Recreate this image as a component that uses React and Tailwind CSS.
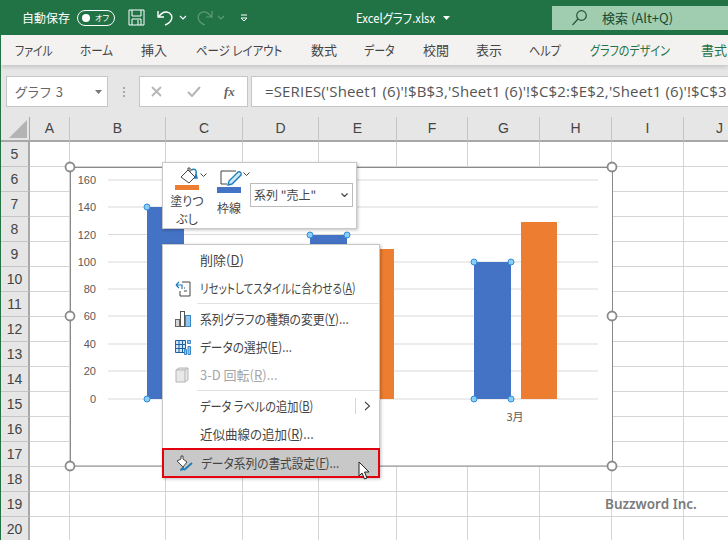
const jp = "font-['Noto_Sans_CJK_JP',sans-serif] [font-feature-settings:'palt']"
// Meiryo UI has narrow kana, so kana heavy labels get squeezed to the same width
const narrow = 'inline-block origin-left whitespace-nowrap'

const tabs = [
    {label: 'ファイル', w: 'w-[37px]', sx: 'scale-x-[0.84]'},
    {label: 'ホーム', w: 'w-[33px]', sx: 'scale-x-[0.89]'},
    {label: '挿入', w: 'w-[27px]', sx: ''},
    {label: 'ページ レイアウト', w: 'w-[87px]', sx: 'scale-x-[0.88]'},
    {label: '数式', w: 'w-[25px]', sx: ''},
    {label: 'データ', w: 'w-[31px]', sx: 'scale-x-[0.84]'},
    {label: '校閲', w: 'w-[25px]', sx: ''},
    {label: '表示', w: 'w-[25px]', sx: ''},
    {label: 'ヘルプ', w: 'w-[33px]', sx: 'scale-x-[0.86]'},
    {label: 'グラフのデザイン', w: 'w-[83px]', sx: 'scale-x-[0.85]', green: true},
    {label: '書式', w: 'w-[26px]', sx: '', green: true},
]
const columns = ['A', 'B', 'C', 'D', 'E', 'F', 'G', 'H', 'I', 'J']
const rows = [5, 6, 7, 8, 9, 10, 11, 12, 13, 14, 15, 16, 17, 18, 19, 20]
const gridCols = 'grid grid-cols-[29px_40px_96px_77px_76px_78px_71px_72px_72px_72px_72px]'

function Caret({dim}){
    return <svg width="8" height="5" viewBox="0 0 8 5" fill="none" stroke={dim ? '#5c9a78' : '#fff'} strokeWidth="1.2"><path d="M1 1l3 3 3-3"/></svg>
}

function TitleBar(){
    return(
        <div className={`h-[35px] bg-[#217346] flex items-center text-white shrink-0 ${jp}`}>
            <span className="ml-[21px] text-[12px] w-[50px] whitespace-nowrap">自動保存</span>
            <div className="ml-[5px] w-[38px] h-[16px] rounded-full border border-white flex items-center justify-between pl-[4px] pr-[5px]">
                <span className="w-[8px] h-[8px] rounded-full bg-white"></span>
                <span className="text-[8px] leading-none">オフ</span>
            </div>
            <svg className="ml-[13px]" width="17" height="17" viewBox="0 0 17 17" fill="none" stroke="#fff" strokeWidth="1"><path d="M1 1h15v15H1zM4 1v6h9V1M4 16v-6h9v6M10 11v5"/></svg>
            <svg className="ml-[12px]" width="17" height="18" viewBox="0 0 17 18" fill="none" stroke="#fff" strokeWidth="1.4"><path d="M1 2v6h6M1.5 8C5 3 9 2 12.500 4c4 3 3 9-4.500 12"/></svg>
            <span className="ml-[5px]"><Caret/></span>
            <svg className="ml-[9px]" width="17" height="18" viewBox="0 0 17 18" fill="none" stroke="#5c9a78" strokeWidth="1.2"><path d="M16 2v6h-6M15.500 8C12 3 8 2 4.500 4c-4 3-3 9 4.500 12"/></svg>
            <span className="ml-[4px]"><Caret dim/></span>
            <svg className="ml-[15px]" width="8" height="8" viewBox="0 0 8 8" fill="none" stroke="#fff" strokeWidth="1"><path d="M1 1h6M1 4l3 3 3-3z"/></svg>
            <span className="ml-[108px] text-[13px] w-[82px]"><span className={`${narrow} scale-x-[0.87]`}>Excelグラフ.xlsx</span></span>
            <svg className="ml-[5px]" width="7" height="4" viewBox="0 0 7 4" fill="#fff"><path d="M0 0h7L3.500 4z"/></svg>
            <div className="ml-[102px] flex-1 h-[24px] bg-[#a0cdb0] flex items-center text-[#1c4a2e]">
                <svg className="ml-[20px]" width="15" height="16" viewBox="0 0 15 16" fill="none" stroke="#23553a" strokeWidth="1.2"><circle cx="9.500" cy="5.500" r="4.800"/><path d="M6 9l-5.500 6"/></svg>
                <span className="ml-[15px] text-[13px] whitespace-nowrap">検索 (Alt+Q)</span>
            </div>
        </div>
    )
}

function TabBar(){
    return(
        <div className={`relative z-10 h-[30px] bg-[#f3f2f1] flex items-center gap-[28px] pl-[14px] shrink-0 shadow-[0_2px_4px_rgba(0,0,0,0.15)] ${jp}`}>
            {tabs.map(t => (
                <span key={t.label} className={`${t.w} shrink-0 text-[13px] ${t.green ? 'text-[#217346]' : 'text-[#444]'}`}>
                    <span className={`${narrow} ${t.sx}`}>{t.label}</span>
                </span>
            ))}
        </div>
    )
}

function FormulaBar(){
    return(
        <div className="h-[52px] bg-[#e6e6e6] flex pt-[11px] pl-[5px] shrink-0">
            <div className={`w-[102px] h-[31px] bg-white border border-[#c6c6c6] flex items-center justify-between pl-[8px] pr-[5px] text-[13px] text-[#666] ${jp}`}>
                <span className="tracking-[1px]">グラフ 3</span>
                <svg width="7" height="4" viewBox="0 0 7 4" fill="#777"><path d="M0 0h7L3.500 4z"/></svg>
            </div>
            <div className="w-[31px] h-[31px] flex flex-col items-center justify-center gap-[2px]">
                <span className="w-[2px] h-[2px] bg-[#aaa]"></span>
                <span className="w-[2px] h-[2px] bg-[#aaa]"></span>
                <span className="w-[2px] h-[2px] bg-[#aaa]"></span>
            </div>
            <div className="w-[109px] h-[31px] bg-white border border-[#c6c6c6] flex items-center pl-[11px]">
                <svg width="11" height="11" viewBox="0 0 11 11" stroke="#b5b5b5" strokeWidth="1.800" fill="none"><path d="M1 1l9 9M10 1l-9 9"/></svg>
                <svg className="ml-[25px]" width="14" height="11" viewBox="0 0 14 11" stroke="#b5b5b5" strokeWidth="2" fill="none"><path d="M1 6l4 4 8-9"/></svg>
                <span className="ml-[23px] text-[13px] font-bold italic text-[#666] font-['Liberation_Serif',serif]">fx</span>
            </div>
            <div className="ml-[3px] flex-1 min-w-0 h-[31px] bg-white border border-r-0 border-[#c6c6c6] flex items-center pl-[13px] overflow-hidden">
                <span className="whitespace-nowrap text-[15px] text-[#555] font-['Open_Sans',sans-serif] tracking-[0.16px]">=SERIES('Sheet1 (6)'!$B$3,'Sheet1 (6)'!$C$2:$E$2,'Sheet1 (6)'!$C$3</span>
            </div>
        </div>
    )
}

function Sheet(){
    return(
        <div className={`${gridCols} font-['Liberation_Sans',sans-serif]`}>
            <div className="h-[25px] bg-[#e6e6e6] border-b-2 border-r border-[#a8a8a8] flex items-end justify-end pr-[2px] pb-[2px]">
                <svg width="18" height="18" viewBox="0 0 18 18" fill="#b4b4b4"><path d="M18 0v18H0z"/></svg>
            </div>
            {columns.map(c => (
                <div key={c} className="h-[25px] bg-[#e6e6e6] border-b-2 border-r border-b-[#a8a8a8] border-r-[#c4c4c4] flex items-center justify-center text-[14px] text-[#444]">{c}</div>
            ))}
            {rows.map(r => [
                <div key={r} className="h-[25px] bg-[#e6e6e6] border-b border-r-2 border-b-[#c4c4c4] border-r-[#a8a8a8] flex items-center justify-center text-[14px] text-[#444]">{r}</div>,
                ...columns.map(c => <div key={r + c} className="h-[25px] bg-white border-b border-r border-[#d4d4d4]"></div>),
            ])}
        </div>
    )
}

const axis = [
    {label: 160, y: 180},
    {label: 140, y: 207},
    {label: 120, y: 234.500},
    {label: 100, y: 262},
    {label: 80, y: 289},
    {label: 60, y: 316},
    {label: 40, y: 344},
    {label: 20, y: 371},
    {label: 0, y: 399},
]
const bars = [
    {x: 147, y: 207, w: 37, fill: '#4472c4', selected: true},
    {x: 310, y: 235, w: 37, fill: '#4472c4', selected: true},
    {x: 358, y: 249, w: 36, fill: '#ed7d31'},
    {x: 474, y: 262, w: 37, fill: '#4472c4', selected: true},
    {x: 521, y: 222, w: 36, fill: '#ed7d31'},
]
const chartHandles = [[70, 167], [612, 167], [70, 316], [612, 316], [70, 466], [612, 466]]

// the chart keeps page coordinates, so the numbers match the picture directly
function Chart(){
    return(
        <svg className="absolute left-0 top-0" width="728" height="540" viewBox="0 0 728 540">
            <rect x="70.500" y="167.500" width="542" height="298.500" fill="#fff" stroke="#8a8a8a"/>
            {axis.map(a => (
                <g key={a.label}>
                    <line x1="108" x2="598" y1={a.y} y2={a.y} stroke="#d9d9d9"/>
                    <text x="96" y={a.y + 4} textAnchor="end" fontSize="11" fill="#595959" fontFamily="Liberation Sans">{a.label}</text>
                </g>
            ))}
            {bars.map(b => <rect key={b.x} x={b.x} y={b.y} width={b.w} height={399 - b.y} fill={b.fill}/>)}
            {bars.filter(b => b.selected).map(b => (
                <g key={b.x} fill="#8ccdf5" stroke="#2f8fdc">
                    <circle cx={b.x} cy={b.y} r="3"/>
                    <circle cx={b.x + b.w} cy={b.y} r="3"/>
                    <circle cx={b.x} cy="399" r="3"/>
                    <circle cx={b.x + b.w} cy="399" r="3"/>
                </g>
            ))}
            <text x="515" y="421" textAnchor="middle" fontSize="11" fill="#595959" fontFamily="Noto Sans CJK JP">3月</text>
            {chartHandles.map(([x, y]) => <circle key={x + '-' + y} cx={x} cy={y} r="4.500" fill="#fff" stroke="#8a8a8a" strokeWidth="1.800"/>)}
        </svg>
    )
}

function MiniToolbar(){
    return(
        <div className={`absolute left-[162px] top-[162px] w-[195px] h-[67px] bg-white border border-[#c8c8c8] shadow-[1px_1px_3px_rgba(0,0,0,0.25)] flex text-[#444] ${jp}`}>
            <div className="ml-[10px] w-[32px] flex flex-col items-center">
                <div className="flex items-start h-[24px] pt-[4px]">
                    <svg width="22" height="18" viewBox="0 0 22 18" fill="none" stroke="#444"><path d="M1 10l7-7 7 7-6 6z"/><path d="M8 3V1h2v4"/><path d="M11 3c4-2 6 0 5 4M16 7l-1 4h2z" stroke="#1f7fb8" strokeWidth="1.500"/></svg>
                    <span className="mt-[6px] -mr-[8px] -ml-[2px]"><svg width="7" height="4" viewBox="0 0 7 4" fill="none" stroke="#444"><path d="M.5.5l3 3 3-3"/></svg></span>
                </div>
                <div className="w-[24px] h-[6px] bg-[#ed7d31] -ml-[4px]"></div>
                <span className="mt-[2px] text-[12px] leading-[18px] text-center -ml-[4px] whitespace-nowrap">塗りつ<br/>ぶし</span>
            </div>
            <div className="ml-[10px] w-[32px] flex flex-col items-center">
                <div className="flex items-start h-[24px] pt-[7px]">
                    <svg width="24" height="17" viewBox="0 0 24 17" fill="none"><path d="M1 1v13h6M1 1h15" stroke="#444"/><path d="M8 15l1-4 9-9c2-1 4 1 3 3l-9 9z" stroke="#1f7fb8" strokeWidth="1.400" fill="#cfe8fa"/></svg>
                    <span className="mt-[2px] -mr-[8px] -ml-[1px]"><svg width="7" height="4" viewBox="0 0 7 4" fill="none" stroke="#444"><path d="M.5.5l3 3 3-3"/></svg></span>
                </div>
                <div className="w-[24px] h-[6px] bg-[#4472c4] -ml-[4px]"></div>
                <span className="mt-[6px] text-[12px] leading-[17px] -ml-[4px] whitespace-nowrap">枠線</span>
            </div>
            <div className="ml-[3px] mt-[20px] w-[103px] h-[24px] border border-[#bbb] flex items-center justify-between pl-[3px] pr-[4px]">
                <span className="text-[12px] whitespace-nowrap">系列 "売上"</span>
                <svg width="7" height="4" viewBox="0 0 7 4" fill="none" stroke="#444" strokeWidth="1.200"><path d="M.5.5l3 3 3-3"/></svg>
            </div>
        </div>
    )
}

function ResetIcon(){
    return <svg width="16" height="17" viewBox="0 0 16 17" fill="none"><path d="M7 2h8v14H5v-5" stroke="#444"/><path d="M1 5l3-3M1 5l3 3M1 5h6v4" stroke="#1f7fb8" strokeWidth="1.200"/><path d="M9 11h3M9 8h1" stroke="#444"/></svg>
}
function BarsIcon(){
    return <svg width="16" height="16" viewBox="0 0 16 16"><rect x="0.500" y="8.500" width="4" height="7" fill="#d4d4d4" stroke="#666"/><rect x="5.500" y="0.500" width="4" height="15" fill="#fff" stroke="#555"/><rect x="10.500" y="4.500" width="5" height="11" fill="#8fc5f0" stroke="#3a87c8"/></svg>
}
function DataIcon(){
    return <svg width="16" height="16" viewBox="0 0 16 16" fill="none"><path d="M.5 1.500h10v4h-10zM.5 5.500h10v4h-10zM.5 9.500h10v4h-10z" fill="#cfe6f8" stroke="#1f5f9e"/><path d="M4 1.500v12M7.500 1.500v12" stroke="#1f5f9e"/><path d="M12.500 1.500h3v3h-3zM9.500 10.500h2v5h-2zM13 7.500h2.500v8H13z" fill="#8fc5f0" stroke="#3a87c8"/></svg>
}
function CubeIcon(){
    return <svg width="14" height="16" viewBox="0 0 14 16" fill="#e8e8e8" stroke="#b5b5b5"><path d="M1 3l3-2h9v12l-3 2H1z"/><path d="M1 3h9v12M10 3l3-2" fill="none"/></svg>
}
function FormatIcon(){
    return <svg width="17" height="17" viewBox="0 0 17 17" fill="none"><path d="M1 6l4-2V1h2v3l4 3-4 5z" fill="#fff" stroke="#444"/><path d="M8 15l8-7" stroke="#1f7fb8" strokeWidth="2"/><path d="M4 16c0-2 1-4 4-4v3z" fill="#1f7fb8"/></svg>
}

function MenuItem({icon, label, shortcut, tail, disabled, hi, sx}){
    return(
        <div className={`flex items-center pl-[12px] pr-[9px] text-[13px] ${hi ? 'h-[30px] -mx-px bg-[#c8c8c8] border-2 border-[#e3000f]' : 'h-[28px]'} ${disabled ? 'text-[#a6a6a6]' : 'text-[#444]'}`}>
            <span className="w-[25px] shrink-0 flex items-center">{icon}</span>
            <span className={`${narrow} ${sx}`}>{label}(<span className="underline">{shortcut}</span>){tail}</span>
        </div>
    )
}

function ContextMenu(){
    return(
        <div className={`absolute left-[162px] top-[244px] w-[218px] h-[234px] bg-white border border-[#c8c8c8] border-b-0 shadow-[1px_1px_3px_rgba(0,0,0,0.25)] pt-[1px] ${jp}`}>
            <MenuItem label="削除" shortcut="D" sx=""/>
            <MenuItem icon={<ResetIcon/>} label="リセットしてスタイルに合わせる" shortcut="A" sx="scale-x-[0.81]"/>
            <div className="ml-[34px] h-px bg-[#e1e1e1] my-px"></div>
            <MenuItem icon={<BarsIcon/>} label="系列グラフの種類の変更" shortcut="Y" tail="..." sx="scale-x-[0.91]"/>
            <MenuItem icon={<DataIcon/>} label="データの選択" shortcut="E" tail="..." sx="scale-x-[0.9]"/>
            <MenuItem icon={<CubeIcon/>} label="3-D 回転" shortcut="R" tail="..." disabled sx=""/>
            <div className="ml-[34px] h-px bg-[#e1e1e1] my-px"></div>
            <div className="flex items-center">
                <div className="flex-1"><MenuItem label="データ ラベルの追加" shortcut="B" sx="scale-x-[0.86]"/></div>
                <span className="w-px h-[16px] bg-[#d8d8d8]"></span>
                <svg className="mx-[8px]" width="7" height="10" viewBox="0 0 7 10" fill="none" stroke="#444" strokeWidth="1.100"><path d="M1 1l4.500 4L1 9"/></svg>
            </div>
            <MenuItem label="近似曲線の追加" shortcut="R" tail="..." sx="scale-x-[0.96]"/>
            <MenuItem icon={<FormatIcon/>} label="データ系列の書式設定" shortcut="F" tail="..." hi sx="scale-x-[0.9]"/>
        </div>
    )
}

function Cursor(){
    return(
        <svg className="absolute left-[358px] top-[461px]" width="13" height="20" viewBox="0 0 13 20"><path d="M1 1v14l3-3 2.500 6 2.500-1-2.500-6H11z" fill="#fff" stroke="#222"/></svg>
    )
}

export default function App(){
    return(
        <div className="relative w-[728px] h-[540px] overflow-hidden flex flex-col bg-white border-l border-[#217346]">
            <TitleBar/>
            <TabBar/>
            <FormulaBar/>
            <Sheet/>
            <div className="absolute left-[-1px] top-0 w-[728px] h-[540px]">
                <Chart/>
                <MiniToolbar/>
                <ContextMenu/>
                <Cursor/>
                <span className="absolute left-[605px] top-[494px] text-[13.500px] font-semibold text-[#7a7a7a] font-['Noto_Sans',sans-serif] whitespace-nowrap">Buzzword Inc.</span>
            </div>
        </div>
    )
}
